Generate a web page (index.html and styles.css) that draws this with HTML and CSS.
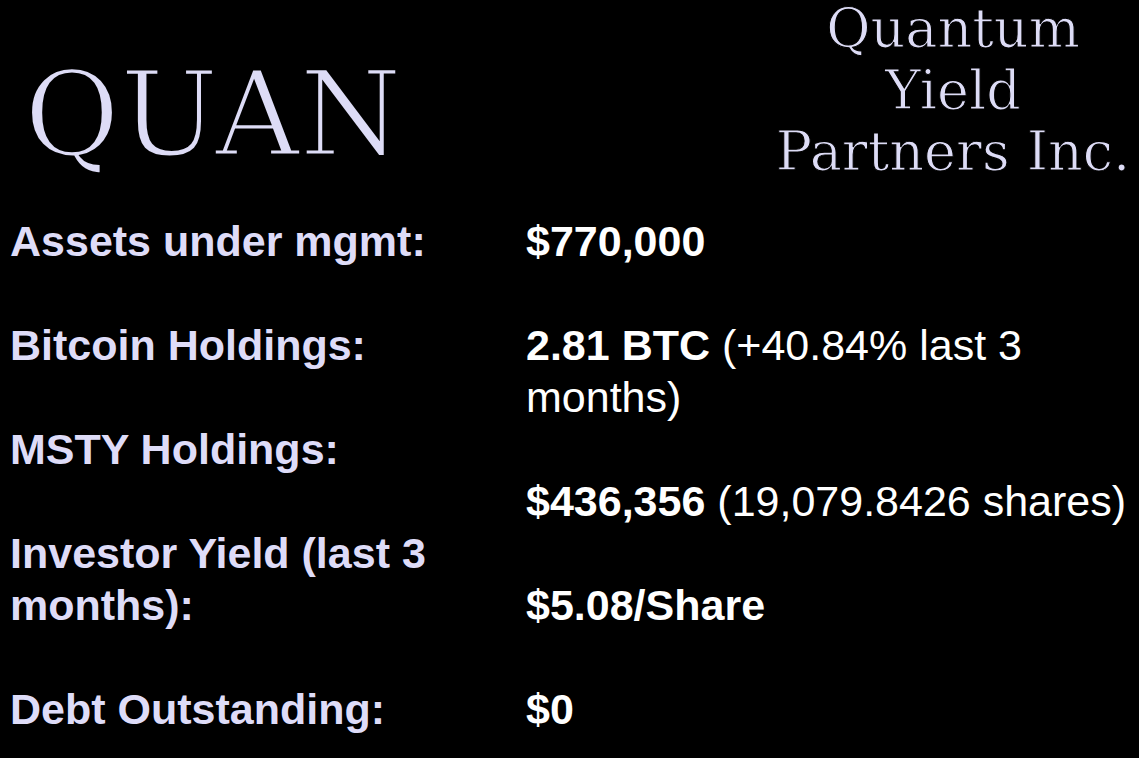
FILE: index.html
```html
<!DOCTYPE html>
<html lang="en">
<head>
<meta charset="utf-8">
<title>QUAN - Quantum Yield Partners Inc.</title>
<link rel="stylesheet" href="styles.css">
</head>
<body>
<div class="slide">
  <header class="header">
    <div class="ticker">QUAN</div>
    <div class="company">Quantum<br>Yield<br>Partners Inc.</div>
  </header>
  <main class="facts">
    <div class="labels">
      <p class="line">Assets under mgmt:</p>
      <p class="line">Bitcoin Holdings:</p>
      <p class="line">MSTY Holdings:</p>
      <p class="line">Investor Yield (last 3 months):</p>
      <p class="line">Debt Outstanding:</p>
    </div>
    <div class="values">
      <p class="line"><b>$770,000</b></p>
      <p class="line"><b>2.81 BTC</b> (+40.84% last 3 months)</p>
      <p class="line"><b>$436,356</b> (19,079.8426 shares)</p>
      <p class="line"><b>$5.08/Share</b></p>
      <p class="line"><b>$0</b></p>
    </div>
  </main>
</div>
</body>
</html>
```
FILE: styles.css
```css
html, body {
  margin: 0;
  padding: 0;
  background: #000;
}
body {
  width: 1139px;
  height: 758px;
  overflow: hidden;
}
.slide {
  width: 1139px;
  height: 758px;
  display: flex;
  flex-direction: column;
}
.header {
  flex: 0 0 215px;
  height: 215px;
  display: flex;
  justify-content: space-between;
  align-items: flex-start;
  color: #dddcf6;
  font-family: "DejaVu Serif", "Liberation Serif", serif;
  font-weight: normal;
}
.ticker {
  font-size: 117px;
  line-height: 117px;
  padding-top: 56px;
  padding-left: 24px;
  -webkit-text-stroke: 3px #000;
}
.company {
  width: 372px;
  text-align: center;
  font-size: 54px;
  line-height: 61.5px;
  padding-top: 0;
  margin-top: -2px;
  -webkit-text-stroke: 1.1px #000;
}
.facts {
  flex: 0 0 auto;
  display: grid;
  grid-template-columns: 516px 612px;
  padding-left: 10px;
  font-family: "Liberation Sans", Arial, sans-serif;
  font-size: 43px;
  line-height: 52px;
}
.labels {
  color: #dedcf8;
  font-weight: bold;
}
.labels .line {
  width: 470px;
}
.values {
  color: #fff;
}
.line {
  margin: 0 0 52px 0;
}
.line:last-child {
  margin-bottom: 0;
}
.values b {
  font-weight: bold;
}
```
